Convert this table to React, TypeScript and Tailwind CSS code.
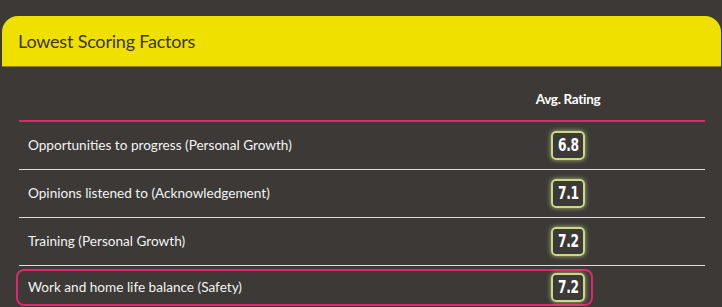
import React from "react";

const rows = [
  { label: "Opportunities to progress (Personal Growth)", value: "6.8" },
  { label: "Opinions listened to (Acknowledgement)", value: "7.1" },
  { label: "Training (Personal Growth)", value: "7.2" },
];

function Badge({ value }: { value: string }) {
  return (
    <div className="w-[34px] h-[29px] flex items-center justify-center rounded-[5px] border-2 border-[#c9d985] shadow-[0_0_5px_rgba(214,230,140,0.75)] text-white leading-none">
      <span
        className="inline-block scale-x-[0.72] text-[17px] font-bold tracking-[-0.5px]"
        style={{ fontFamily: '"DejaVu Sans", sans-serif' }}
      >
        {value}
      </span>
    </div>
  );
}

export default function App() {
  return (
    <div
      className="w-[722px] h-[307px] bg-[#3c3936] pt-[16px] pl-[2px] pr-[1px] overflow-hidden"
      style={{ fontFamily: 'Lato, "Open Sans", sans-serif' }}
    >
      <div className="h-[51px] bg-[#f0e000] rounded-t-[16px] border-b border-[#8a8220] flex items-center pl-[16px]">
        <span className="text-[18px] text-[#3a3631] tracking-[-0.2px]">Lowest Scoring Factors</span>
      </div>
      <div className="pl-[17px] pr-[16px]">
        <div className="h-[55px] border-b-2 border-[#e0266f] flex items-end pb-[11px]">
          <div className="w-[532px]" />
          <div className="w-[34px] flex justify-center">
            <span className="whitespace-nowrap text-white text-[13.5px] font-bold tracking-[-0.3px]">Avg. Rating</span>
          </div>
        </div>
        {rows.map((r) => (
          <div key={r.label} className="h-[48px] border-b border-[#dcdcdc] flex items-center">
            <div className="w-[532px] pl-[9px] text-[13.6px] text-[#f3f3f3]">{r.label}</div>
            <Badge value={r.value} />
          </div>
        ))}
        <div className="ml-[-3px] mt-[3px] w-[577px] h-[37px] border-2 border-[#e0266f] rounded-[8px] flex items-center">
          <div className="w-[533px] pl-[10px] text-[13.6px] text-[#f3f3f3]">Work and home life balance (Safety)</div>
          <Badge value="7.2" />
        </div>
      </div>
    </div>
  );
}
